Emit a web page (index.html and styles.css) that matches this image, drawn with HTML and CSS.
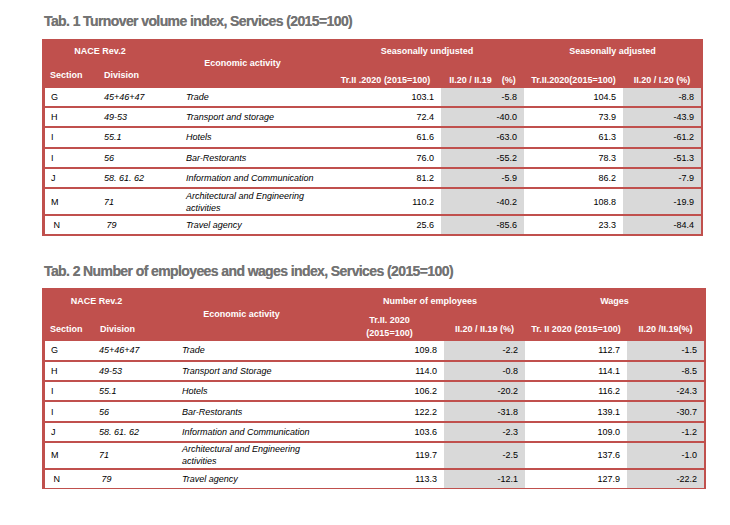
FILE: index.html
```html
<!DOCTYPE html>
<html lang="en">
<head>
<meta charset="utf-8">
<title>Services indices</title>
<link rel="stylesheet" href="styles.css">
</head>
<body>
<div class="page">
  <h2 class="title">Tab. 1 Turnover volume index, Services (2015=100)</h2>
  <div class="tbl t1">
    <table>
      <colgroup>
        <col class="c-sec"><col class="c-div"><col class="c-act"><col class="c-n1"><col class="c-n2"><col class="c-n3"><col class="c-n4">
      </colgroup>
      <thead>
        <tr class="hr1">
          <th colspan="2" class="nace">NACE Rev.2</th>
          <th rowspan="2" class="eco">Economic activity</th>
          <th colspan="2">Seasonally undjusted</th>
          <th colspan="2">Seasonally adjusted</th>
        </tr>
        <tr class="hr2">
          <th class="lh sec-h">Section</th>
          <th class="lh div-h">Division</th>
          <th class="sub">Tr.II .2020 (2015=100)</th>
          <th class="sub">II.20 / II.19&nbsp;&nbsp;&nbsp; (%)</th>
          <th class="sub">Tr.II.2020(2015=100)</th>
          <th class="sub">II.20 / I.20 (%)</th>
        </tr>
      </thead>
      <tbody>
        <tr><td class="sec">G</td><td class="div">45+46+47</td><td class="act">Trade</td><td class="num">103.1</td><td class="num g">-5.8</td><td class="num">104.5</td><td class="num g">-8.8</td></tr>
        <tr><td class="sec">H</td><td class="div">49-53</td><td class="act">Transport and storage</td><td class="num">72.4</td><td class="num g">-40.0</td><td class="num">73.9</td><td class="num g">-43.9</td></tr>
        <tr><td class="sec">I</td><td class="div">55.1</td><td class="act">Hotels</td><td class="num">61.6</td><td class="num g">-63.0</td><td class="num">61.3</td><td class="num g">-61.2</td></tr>
        <tr><td class="sec">I</td><td class="div">56</td><td class="act">Bar-Restorants</td><td class="num">76.0</td><td class="num g">-55.2</td><td class="num">78.3</td><td class="num g">-51.3</td></tr>
        <tr><td class="sec">J</td><td class="div">58. 61. 62</td><td class="act">Information and Communication</td><td class="num">81.2</td><td class="num g">-5.9</td><td class="num">86.2</td><td class="num g">-7.9</td></tr>
        <tr class="tall"><td class="sec">M</td><td class="div">71</td><td class="act">Architectural and Engineering<br>activities</td><td class="num">110.2</td><td class="num g">-40.2</td><td class="num">108.8</td><td class="num g">-19.9</td></tr>
        <tr><td class="sec">&nbsp;N</td><td class="div">&nbsp;79</td><td class="act">Travel agency</td><td class="num">25.6</td><td class="num g">-85.6</td><td class="num">23.3</td><td class="num g">-84.4</td></tr>
      </tbody>
    </table>
  </div>

  <h2 class="title t2-title">Tab. 2 Number of employees and wages index, Services (2015=100)</h2>
  <div class="tbl t2">
    <table>
      <colgroup>
        <col class="c-sec"><col class="c-div"><col class="c-act"><col class="c-n1"><col class="c-n2"><col class="c-n3"><col class="c-n4">
      </colgroup>
      <thead>
        <tr class="hr1">
          <th colspan="2" class="nace">NACE Rev.2</th>
          <th rowspan="2" class="eco">Economic activity</th>
          <th colspan="2">Number of employees</th>
          <th colspan="2">Wages</th>
        </tr>
        <tr class="hr2">
          <th class="lh sec-h">Section</th>
          <th class="lh div-h">Division</th>
          <th class="sub two">Tr.II. 2020<br>(2015=100)</th>
          <th class="sub">II.20 / II.19 (%)</th>
          <th class="sub">Tr. II 2020 (2015=100)</th>
          <th class="sub">II.20 /II.19(%)</th>
        </tr>
      </thead>
      <tbody>
        <tr><td class="sec">G</td><td class="div">45+46+47</td><td class="act">Trade</td><td class="num">109.8</td><td class="num g">-2.2</td><td class="num">112.7</td><td class="num g">-1.5</td></tr>
        <tr><td class="sec">H</td><td class="div">49-53</td><td class="act">Transport and Storage</td><td class="num">114.0</td><td class="num g">-0.8</td><td class="num">114.1</td><td class="num g">-8.5</td></tr>
        <tr><td class="sec">I</td><td class="div">55.1</td><td class="act">Hotels</td><td class="num">106.2</td><td class="num g">-20.2</td><td class="num">116.2</td><td class="num g">-24.3</td></tr>
        <tr><td class="sec">I</td><td class="div">56</td><td class="act">Bar-Restorants</td><td class="num">122.2</td><td class="num g">-31.8</td><td class="num">139.1</td><td class="num g">-30.7</td></tr>
        <tr><td class="sec">J</td><td class="div">58. 61. 62</td><td class="act">Information and Communication</td><td class="num">103.6</td><td class="num g">-2.3</td><td class="num">109.0</td><td class="num g">-1.2</td></tr>
        <tr class="tall"><td class="sec">M</td><td class="div">71</td><td class="act">Architectural and Engineering<br>activities</td><td class="num">119.7</td><td class="num g">-2.5</td><td class="num">137.6</td><td class="num g">-1.0</td></tr>
        <tr><td class="sec">&nbsp;N</td><td class="div">&nbsp;79</td><td class="act">Travel agency</td><td class="num">113.3</td><td class="num g">-12.1</td><td class="num">127.9</td><td class="num g">-22.2</td></tr>
      </tbody>
    </table>
  </div>
</div>
</body>
</html>
```

FILE: styles.css
```css
html, body {
  margin: 0;
  padding: 0;
  background: #ffffff;
}

.page {
  padding: 13px 0 0 42px;
  font-family: "Liberation Sans", Arial, sans-serif;
}

.title {
  margin: 0 0 10px 2px;
  font-size: 14px;
  line-height: 16px;
  font-weight: bold;
  color: #737373;
  letter-spacing: -0.6px;
  text-shadow: 0 0 0.6px #8a8a8a;
}

.t2-title {
  margin-top: 27px;
}

.tbl {
  background: #c0504d;
  padding: 0 2px 0 3px;
  box-sizing: border-box;
}

.t1 { width: 661px; }
.t2 { width: 664px; }

table {
  width: 100%;
  table-layout: fixed;
  border-collapse: separate;
  border-spacing: 0 2px;
  margin: -0.5px 0;
}

th {
  color: #ffffff;
  font-size: 9px;
  font-weight: bold;
  line-height: 11px;
  padding: 0;
  white-space: nowrap;
  text-align: center;
}

td {
  font-size: 9px;
  line-height: 12px;
  color: #000000;
  background: #ffffff;
  padding: 0 7px 0 0;
  white-space: nowrap;
}

td.g { background: #d9d9d9; }

td.num { text-align: right; }
td.sec { padding-left: 6px; }
td.div { padding-left: 7px; font-style: italic; }
td.act { font-style: italic; padding-left: 31px; }

tbody tr { height: 18.4px; }
tbody tr.tall { height: 24.4px; }

.lh { text-align: left; }
.sec-h { padding-left: 5px; }
.div-h { padding-left: 7px; }

/* Table 1 */
.t1 .c-sec { width: 52px; }
.t1 .c-div { width: 58px; }
.t1 .c-act { width: 175px; }
.t1 .c-n1 { width: 111px; }
.t1 .c-n2 { width: 83px; }
.t1 .c-n3 { width: 99px; }
.t1 .c-n4 { width: 78px; }

.t1 .hr1 { height: 22px; }
.t1 .hr2 { height: 21px; }
.t1 .hr2 .sub { vertical-align: bottom; }
.t1 .hr2 .lh { vertical-align: middle; }

/* Table 2 */
.t2 .c-sec { width: 48px; }
.t2 .c-div { width: 55px; }
.t2 .c-act { width: 187px; }
.t2 .c-n1 { width: 109px; }
.t2 .c-n2 { width: 81px; }
.t2 .c-n3 { width: 102px; }
.t2 .c-n4 { width: 77px; }

.t2 .hr1 { height: 22px; }
.t2 .hr2 { height: 24px; }
.t2 .hr2 th { vertical-align: middle; padding-top: 6px; }
.t2 .hr2 th.two { line-height: 12.5px; padding-top: 0; vertical-align: bottom; }
.t2 td.div { padding-left: 6px; }
.t2 td.act { padding-left: 34px; }
```
